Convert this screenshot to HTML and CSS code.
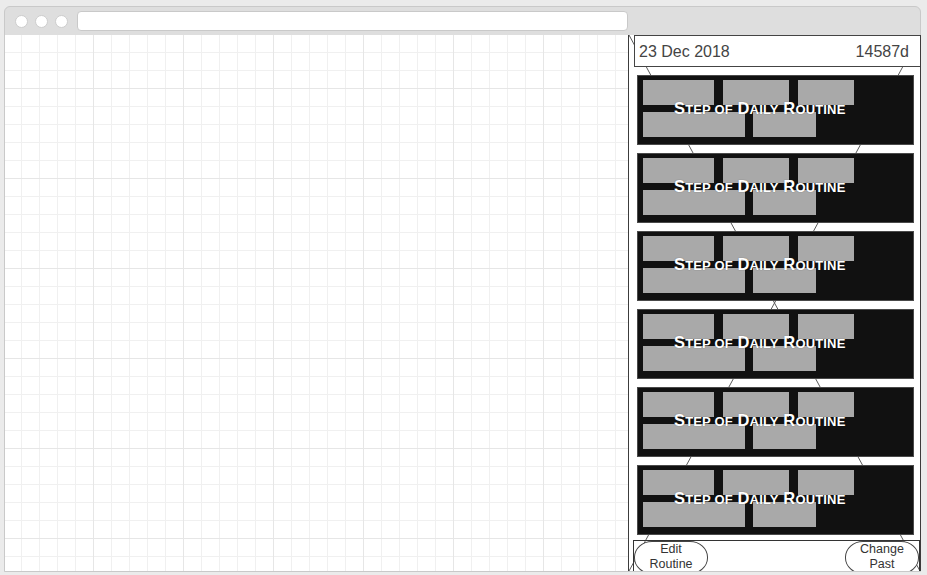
FILE: index.html
```html
<!DOCTYPE html>
<html lang="en">
<head>
<meta charset="utf-8">
<title>Daily Routine</title>
<link rel="stylesheet" href="styles.css">
</head>
<body>
<div class="window">
  <div class="titlebar">
    <div class="dots"><span class="dot"></span><span class="dot"></span><span class="dot"></span></div>
    <div class="address"></div>
  </div>
  <div class="content">
    <div class="canvas"></div>
    <div class="panel">
      <svg class="xlines" width="100%" height="100%" preserveAspectRatio="none">
        <line x1="0" y1="0" x2="100%" y2="100%"></line>
        <line x1="100%" y1="0" x2="0" y2="100%"></line>
      </svg>
      <div class="date-bar"><span>23 Dec 2018</span><span>14587d</span></div>
      <div class="steps">
        <div class="step">
          <div class="row"><span class="blk w71"></span><span class="blk w66"></span><span class="blk w56"></span></div>
          <div class="row row2"><span class="blk w102"></span><span class="blk w63"></span></div>
          <div class="label">S<span class="sm">tep of</span> D<span class="sm">aily</span> R<span class="sm">outine</span></div>
        </div>
        <div class="step">
          <div class="row"><span class="blk w71"></span><span class="blk w66"></span><span class="blk w56"></span></div>
          <div class="row row2"><span class="blk w102"></span><span class="blk w63"></span></div>
          <div class="label">S<span class="sm">tep of</span> D<span class="sm">aily</span> R<span class="sm">outine</span></div>
        </div>
        <div class="step">
          <div class="row"><span class="blk w71"></span><span class="blk w66"></span><span class="blk w56"></span></div>
          <div class="row row2"><span class="blk w102"></span><span class="blk w63"></span></div>
          <div class="label">S<span class="sm">tep of</span> D<span class="sm">aily</span> R<span class="sm">outine</span></div>
        </div>
        <div class="step">
          <div class="row"><span class="blk w71"></span><span class="blk w66"></span><span class="blk w56"></span></div>
          <div class="row row2"><span class="blk w102"></span><span class="blk w63"></span></div>
          <div class="label">S<span class="sm">tep of</span> D<span class="sm">aily</span> R<span class="sm">outine</span></div>
        </div>
        <div class="step">
          <div class="row"><span class="blk w71"></span><span class="blk w66"></span><span class="blk w56"></span></div>
          <div class="row row2"><span class="blk w102"></span><span class="blk w63"></span></div>
          <div class="label">S<span class="sm">tep of</span> D<span class="sm">aily</span> R<span class="sm">outine</span></div>
        </div>
        <div class="step">
          <div class="row"><span class="blk w71"></span><span class="blk w66"></span><span class="blk w56"></span></div>
          <div class="row row2"><span class="blk w102"></span><span class="blk w63"></span></div>
          <div class="label">S<span class="sm">tep of</span> D<span class="sm">aily</span> R<span class="sm">outine</span></div>
        </div>
      </div>
      <div class="actions">
        <button class="pill">Edit<br>Routine</button>
        <button class="pill">Change<br>Past</button>
      </div>
    </div>
  </div>
</div>
</body>
</html>
```

FILE: styles.css
```css
html, body {
  margin: 0;
  padding: 0;
}
body {
  background: #ebebeb;
  width: 927px;
  height: 575px;
  overflow: hidden;
  font-family: "Liberation Sans", Arial, sans-serif;
}
.window {
  margin: 6px 0 0 4px;
  width: 917px;
  height: 566px;
  box-sizing: border-box;
  border: 1px solid #c9c9c9;
  border-radius: 6px 6px 0 0;
  background: #dedede;
  display: flex;
  flex-direction: column;
}
.titlebar {
  height: 28px;
  flex: none;
  display: flex;
  align-items: center;
  padding-left: 10px;
}
.dots {
  display: flex;
  gap: 7px;
}
.dot {
  width: 13px;
  height: 13px;
  box-sizing: border-box;
  border-radius: 50%;
  background: #fff;
  border: 1px solid #cdcdcd;
}
.address {
  margin-left: 9px;
  width: 551px;
  height: 20px;
  box-sizing: border-box;
  background: #fff;
  border: 1px solid #c9c9c9;
  border-radius: 4px;
}
.content {
  flex: 1;
  display: flex;
  background: #fff;
  min-height: 0;
}
.canvas {
  flex: none;
  width: 623px;
  background-color: #fff;
  background-image:
    linear-gradient(to right, #e6e6e6 1px, transparent 1px),
    linear-gradient(to bottom, #e6e6e6 1px, transparent 1px),
    linear-gradient(to right, #f0f0f0 1px, transparent 1px),
    linear-gradient(to bottom, #f0f0f0 1px, transparent 1px);
  background-size: 90px 100%, 100% 90px, 18px 100%, 100% 18px;
  background-position: 88px 0, 0 53px, 16px 0, 0 17px;
}
.panel {
  flex: none;
  width: 293px;
  margin-right: -1px;
  box-sizing: border-box;
  border-left: 1px solid #3c3c3c;
  border-right: 1px solid #3c3c3c;
  background: #fff;
  position: relative;
  overflow: hidden;
  display: flex;
  flex-direction: column;
}
.xlines {
  position: absolute;
  left: 0;
  top: 0;
  width: 100%;
  height: 100%;
  z-index: 0;
}
.xlines line {
  stroke: #5a5a5a;
  stroke-width: 1;
}
.date-bar {
  position: relative;
  z-index: 1;
  flex: none;
  height: 32px;
  box-sizing: border-box;
  margin: 0 -1px 0 5px;
  border: 1px solid #444;
  background: #fff;
  display: flex;
  align-items: center;
  justify-content: space-between;
  padding: 1px 11px 0 4px;
  font-size: 16px;
  color: #444;
}
.steps {
  position: relative;
  z-index: 1;
  margin: 8px 0 0 8px;
  display: flex;
  flex-direction: column;
  gap: 8px;
}
.step {
  position: relative;
  width: 277px;
  height: 70px;
  box-sizing: border-box;
  background: #111;
  border: 1px solid #4a4a4a;
  padding: 4px 0 0 5px;
}
.row {
  display: flex;
  gap: 9px;
  height: 25px;
}
.row2 {
  gap: 8px;
  margin-top: 7px;
}
.blk {
  display: block;
  height: 25px;
  background: #a9a9a9;
}
.w71 { width: 71px; }
.w66 { width: 66px; }
.w56 { width: 56px; }
.w102 { width: 102px; }
.w63 { width: 63px; }
.label {
  position: absolute;
  left: 36px;
  top: 24px;
  line-height: 16px;
  font-size: 16.5px;
  font-weight: bold;
  letter-spacing: 0.15px;
  color: #fff;
  white-space: nowrap;
  text-shadow: 0 0 1px rgba(0, 0, 0, 0.5);
}
.label .sm {
  font-size: 13px;
  text-transform: uppercase;
}
.actions {
  position: relative;
  z-index: 1;
  flex: 1;
  margin: 5px 0 0 4px;
  width: 287px;
  box-sizing: border-box;
  border: 1px solid #333;
  display: flex;
  justify-content: space-between;
  align-items: flex-start;
}
.pill {
  width: 74px;
  height: 33px;
  flex: none;
  box-sizing: border-box;
  margin: 0;
  padding: 0;
  background: #fff;
  border: 1px solid #444;
  border-radius: 18px / 16px;
  font-family: "Liberation Sans", Arial, sans-serif;
  font-size: 12.5px;
  line-height: 15px;
  color: #333;
  text-align: center;
  display: flex;
  flex-direction: column;
  align-items: center;
  justify-content: flex-start;
}
```
